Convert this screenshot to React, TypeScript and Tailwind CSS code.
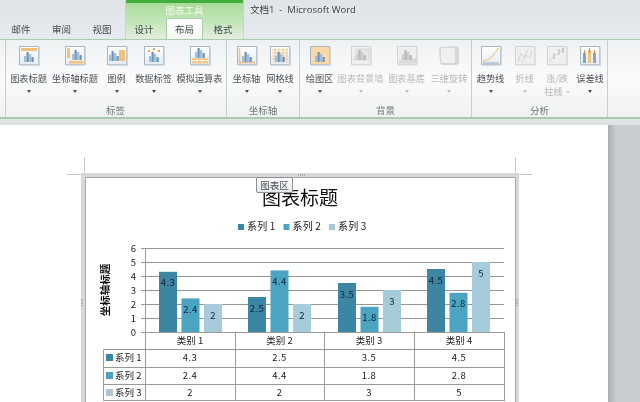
const font = "[font-family:'Noto_Sans_CJK_SC','Noto_Sans',sans-serif]"

type Kind = "title" | "axisTitle" | "legend" | "labels" | "table" | "axis" | "grid" | "plot" | "wall" | "floor" | "rotate" | "trend" | "lines" | "updown" | "error"

function Bars({ x = 7, base = 16, gray = false }: { x?: number; base?: number; gray?: boolean }) {
    const a = gray ? "#b3b6b8" : "#6f8fb8"
    const b = gray ? "#cbcdcf" : "#9cc3d6"
    return (
        <g>
            <rect x={x} y={base - 6} width="2.2" height="6" fill={b} />
            <rect x={x + 2.5} y={base - 10} width="2.2" height="10" fill={a} />
            <rect x={x + 5} y={base - 8} width="2.2" height="8" fill={b} />
            <rect x={x + 7.5} y={base - 5} width="2.2" height="5" fill={a} />
        </g>
    )
}

function RibbonIcon({ kind, off = false }: { kind: Kind; off?: boolean }) {
    if (kind === "rotate") {
        return (
            <svg width="22" height="21" viewBox="0 0 22 21">
                <path d="M3 2 L17 1 Q21 1 21 5 L21 17 Q21 20 17 20 L5 20 Q2 20 2 17 L1 4 Q1 2 3 2Z" fill="#d9d6d8" />
                <path d="M3 3 L15 3 Q17 3 17 5 L17 16 Q17 18 15 18 L5 18 Q3 18 3 16Z" fill="#f1f0f1" />
            </svg>
        )
    }
    return (
        <svg width="22" height="21" viewBox="0 0 22 21">
            <defs>
                <linearGradient id="iconFace" x1="0" y1="0" x2="0" y2="1">
                    <stop offset="0" stopColor="#ffffff" />
                    <stop offset="1" stopColor="#e4ecf5" />
                </linearGradient>
            </defs>
            <rect x="1.5" y="1.5" width="19" height="18" fill={off ? "#efefef" : kind === "plot" ? "#fbd9a3" : "url(#iconFace)"} stroke={off ? "#d0d2d4" : "#a9b6c4"} />
            <rect x="20.500" y="2" width="1.500" height="18.500" fill={off ? "#e2e2e2" : "#cdd5dd"} />
            <rect x="2" y="19.500" width="20" height="1.200" fill={off ? "#e2e2e2" : "#cdd5dd"} />
            {kind === "title" && <rect x="3" y="3" width="16" height="3" fill="#f3c078" />}
            {kind === "axisTitle" && <><rect x="3" y="3" width="3" height="10" fill="#f3c078" /><rect x="5" y="16" width="14" height="2.5" fill="#f3c078" /></>}
            {kind === "legend" && <rect x="13" y="5" width="6" height="11" fill="#f3c078" />}
            {kind === "labels" && <><rect x="5" y="5" width="2" height="2" fill="#eca655" /><rect x="10" y="3" width="2" height="2" fill="#eca655" /><rect x="15" y="5" width="2" height="2" fill="#eca655" /></>}
            {kind === "table" && <><rect x="3" y="13" width="16" height="5.5" fill="#f3c78c" /><path d="M3 15.5H19M8 13V18.5M13 13V18.5" stroke="#fff" strokeWidth=".6" /></>}
            {kind === "axis" && <path d="M3.5 3V17.5H19" fill="none" stroke="#f0ab5e" strokeWidth="1.6" strokeDasharray="1.6 .8" />}
            {kind === "grid" && <path d="M3 5H19M3 8H19M3 11H19M3 14H19M6 3V18M10 3V18M14 3V18M18 3V18" stroke="#f3c078" strokeWidth=".8" />}
            {kind === "wall" && <path d="M3 15L6 11V4H19V15Z" fill="#e6e6e6" stroke="#c8cacc" strokeWidth=".6" />}
            {kind === "floor" && <path d="M2.5 18L6 14H19.5V18Z" fill="#dcdcdc" stroke="#c8cacc" strokeWidth=".6" />}
            {(kind === "title" || kind === "labels" || kind === "table" || kind === "axis" || kind === "grid" || kind === "plot") && <Bars x={6} base={kind === "table" ? 13 : 17} />}
            {kind === "axisTitle" && <Bars x={8} base={15} />}
            {kind === "legend" && <Bars x={3} base={16} />}
            {(kind === "wall" || kind === "floor") && <Bars x={6} base={15} gray />}
            {kind === "trend" && <><path d="M3 16C9 15 13 12 18 3" fill="none" stroke="#e8a23c" strokeWidth="1.1" strokeDasharray="1.4 1" /><path d="M3 18H19" stroke="#8a95a1" strokeWidth=".8" /></>}
            {kind === "lines" && <path d="M4 17L7 8L10 12L14 4M8 18L12 10L16 13L18 5" fill="none" stroke="#cfd1d3" strokeWidth=".9" />}
            {kind === "updown" && <><path d="M3 17L8 11L13 8L18 3" fill="none" stroke="#cfd1d3" strokeWidth=".9" /><rect x="7" y="8" width="2" height="6" fill="#cfd1d3" /><rect x="12" y="4" width="2" height="6" fill="#cfd1d3" /><rect x="16" y="3" width="2" height="5" fill="#c4c6c8" /></>}
            {kind === "error" && (
                <g>
                    <rect x="4" y="8" width="3" height="10" fill="#8ba0c6" />
                    <rect x="9" y="5" width="3" height="13" fill="#ecca75" />
                    <rect x="14" y="8" width="3" height="10" fill="#8ba0c6" />
                    <path d="M5.500 5V10M10.500 3V8M15.500 5V10" stroke="#d08a45" strokeWidth=".9" />
                </g>
            )}
        </svg>
    )
}

function RibbonButton({ w, label, kind, off = false, second }: { w: string; label: string; kind: Kind; off?: boolean; second?: string }) {
    return (
        <div className={`${w} shrink-0 flex flex-col items-center`}>
            <RibbonIcon kind={kind} off={off} />
            <div className={`mt-[6px] h-[13px] text-[9.2px] leading-[13px] whitespace-nowrap ${off ? "text-[#b4b8bb]" : "text-[#4b5157]"}`}>{label}</div>
            {second ? (
                <div className="h-[13px] text-[9.2px] leading-[13px] text-[#b4b8bb] flex items-center gap-[3px] whitespace-nowrap">
                    {second}
                    <span className="w-0 h-0 border-x-[2px] border-t-[2px] border-x-transparent border-t-[#bcc0c3]" />
                </div>
            ) : (
                <div className="h-[13px] flex items-center">
                    <span className={`w-0 h-0 border-x-[2px] border-t-[3px] border-x-transparent ${off ? "border-t-[#bcc0c3]" : "border-t-[#4b5157]"}`} />
                </div>
            )}
        </div>
    )
}

function Group({ w, label, children }: { w: string; label: string; children: React.ReactNode }) {
    return (
        <div className={`${w} shrink-0 h-full border-r border-[#c3d2c6] flex flex-col`}>
            <div className="flex pt-[5px] h-[62px]">{children}</div>
            <div className="flex-1 flex items-center justify-center text-[9.5px] text-[#6f7a74] pt-[1px]">{label}</div>
        </div>
    )
}

function Tab({ label, w }: { label: string; w: string }) {
    return <div className={`${w} h-[20px] shrink-0 flex items-center justify-center text-[9.5px] text-[#454b50]`}>{label}</div>
}

const cats = [
    { name: "类别 1", x: 159, s: [4.3, 2.4, 2] },
    { name: "类别 2", x: 248, s: [2.5, 4.4, 2] },
    { name: "类别 3", x: 338, s: [3.5, 1.8, 3] },
    { name: "类别 4", x: 427, s: [4.5, 2.8, 5] },
]
const colors = ["#3d86a3", "#4aa4c2", "#a6cbdb"]
const gridYs = [248, 262, 276, 290, 304, 318, 332]
const colXs = [145, 235, 324, 414, 504]
const rowYs = [332, 349, 367, 384, 400]

function Chart() {
    return (
        <svg width="608" height="277" viewBox="0 125 608 277" className="block">
            {/* crop marks */}
            <path d="M84.500 157V175M67 174.500H84M515.500 157V175M518 174.500H532" stroke="#c4c6c8" />
            {/* selection frame */}
            <rect x="81" y="173" width="438" height="5" fill="#d8d8d8" />
            <rect x="81" y="173" width="5" height="229" fill="#d8d8d8" />
            <rect x="515" y="173" width="4" height="229" fill="#d8d8d8" />
            <path d="M85.500 402V177.500H515.500V402" fill="none" stroke="#a8a8a8" />
            <path d="M298 175H306M82 299V306M517 299V306" stroke="#a9a9a9" strokeDasharray="1 1" strokeWidth="2" />

            <text x="300" y="205" textAnchor="middle" fontSize="19" fill="#111">图表标题</text>

            {/* legend */}
            {["系列 1", "系列 2", "系列 3"].map((t, i) => (
                <g key={t}>
                    <rect x={238 + i * 45.500} y={224} width="6" height="6" fill={["#3d86a3", "#4aa4c2", "#a9c8d6"][i]} />
                    <text x={247 + i * 45.500} y={230} fontSize="10" letterSpacing=".2" fill="#222">{t}</text>
                </g>
            ))}

            {/* axis */}
            {gridYs.map((y, i) => (
                <g key={y}>
                    <line x1="141" x2="504" y1={y + 0.5} y2={y + 0.5} stroke="#959595" />
                    <text x="136" y={y + 3.500} textAnchor="end" fontSize="9.500" fill="#222">{6 - i}</text>
                </g>
            ))}
            <text transform="translate(109 290) rotate(-90)" textAnchor="middle" fontSize="10.500" fontWeight="700" fill="#111">坐标轴标题</text>

            {/* bars */}
            {cats.map(c => c.s.map((v, i) => {
                const bx = c.x + i * 22.500
                const h = v * 14
                return (
                    <g key={c.name + i}>
                        <rect x={bx} y={332 - h} width="18" height={h} fill={colors[i]} />
                        <text x={bx + 9} y={332 - h + 14.500} textAnchor="middle" fontSize="9.500" letterSpacing=".4" fill="#123">{v}</text>
                    </g>
                )
            }))}

            {/* data table */}
            <path d="M145 332.500H504.500V400.500H103.500V349.500H504.500M103.500 367.500H504.500M103.500 384.500H504.500M145.500 248V401M235.500 332V401M324.500 332V401M414.500 332V401M504.500 332V401" fill="none" stroke="#999999" />
            {cats.map((c, i) => (
                <text key={c.name} x={(colXs[i] + colXs[i + 1]) / 2} y="344" textAnchor="middle" fontSize="9.500" fill="#222">{c.name}</text>
            ))}
            {[0, 1, 2].map(r => (
                <g key={r}>
                    <rect x="106" y={rowYs[r + 1] + 5} width="7" height="7" fill={["#3d86a3", "#4aa4c2", "#a9c8d6"][r]} />
                    <text x="115" y={rowYs[r + 1] + 12} fontSize="9.500" fill="#222">系列 {r + 1}</text>
                    {cats.map((c, i) => (
                        <text key={c.name} x={(colXs[i] + colXs[i + 1]) / 2} y={rowYs[r + 1] + 12} textAnchor="middle" fontSize="9.500" letterSpacing=".4" fill="#222">{c.s[r]}</text>
                    ))}
                </g>
            ))}
        </svg>
    )
}

export default function App() {
    return (
        <div className={`relative w-[640px] h-[402px] overflow-hidden flex flex-col bg-white blur-[0.3px] ${font}`}>
            {/* title bar + tabs */}
            <div className="h-[39px] shrink-0 flex bg-gradient-to-b from-[#e0e4e8] to-[#e6e9ed]">
                <div className="flex items-end pl-px w-[125px] shrink-0">
                    <Tab label="邮件" w="w-[40px]" />
                    <Tab label="审阅" w="w-[41px]" />
                    <Tab label="视图" w="w-[40px]" />
                </div>
                <div className="w-[119px] shrink-0 flex flex-col bg-gradient-to-b from-[#a4da94] via-[#c6e6bc] via-60% to-[#e3eee0] border-x border-[#c5d6c2]">
                    <div className="h-[3px] bg-[#3fae3c]" />
                    <div className="h-[16px] flex items-center justify-center text-[9.5px] text-[#f1f9ee]">图表工具</div>
                    <div className="flex-1 flex items-end">
                        <Tab label="设计" w="w-[36px] mr-[4px]" />
                        <div className="w-[37px] h-[21px] shrink-0 flex items-center justify-center text-[9.5px] text-[#454b50] bg-gradient-to-b from-white to-[#f3f6f4] border-x border-t border-[#a8cfa6] rounded-t-[2px]">布局</div>
                        <Tab label="格式" w="w-[40px]" />
                    </div>
                </div>
                <div className="pl-[6px] pt-[1px] text-[9.5px] leading-[18px] text-[#3d4246] whitespace-pre [font-family:'Open_Sans','Noto_Sans_CJK_SC',sans-serif]">文档1  -  Microsoft Word</div>
            </div>

            {/* ribbon */}
            <div className="h-[80px] shrink-0 flex pl-[5px] border-t border-b-2 border-[#a9cdab] bg-gradient-to-b from-[#eef1f3] via-[#fafbfb] to-[#eff1f2]">
                <div className="absolute left-[5px] top-[40px] h-[78px] border-l border-[#c3d2c6]" />
                <Group w="w-[222px]" label="标签">
                    <RibbonButton w="w-[47px]" label="图表标题" kind="title" />
                    <RibbonButton w="w-[46px]" label="坐标轴标题" kind="axisTitle" />
                    <RibbonButton w="w-[37px]" label="图例" kind="legend" />
                    <RibbonButton w="w-[37px]" label="数据标签" kind="labels" />
                    <RibbonButton w="w-[55px]" label="模拟运算表" kind="table" />
                </Group>
                <Group w="w-[73px]" label="坐标轴">
                    <RibbonButton w="w-[39px]" label="坐标轴" kind="axis" />
                    <RibbonButton w="w-[28px]" label="网格线" kind="grid" />
                </Group>
                <Group w="w-[172px]" label="背景">
                    <RibbonButton w="w-[39px]" label="绘图区" kind="plot" />
                    <RibbonButton w="w-[43px]" label="图表背景墙" kind="wall" off />
                    <RibbonButton w="w-[49px]" label="图表基底" kind="floor" off />
                    <RibbonButton w="w-[36px]" label="三维旋转" kind="rotate" off />
                </Group>
                <Group w="w-[136px]" label="分析">
                    <RibbonButton w="w-[37px]" label="趋势线" kind="trend" />
                    <RibbonButton w="w-[31px]" label="折线" kind="lines" off />
                    <RibbonButton w="w-[34px]" label="涨/跌" kind="updown" off second="柱线" />
                    <RibbonButton w="w-[32px]" label="误差线" kind="error" />
                </Group>
            </div>

            {/* strip under the ribbon */}
            <div className="h-[6px] shrink-0 bg-[#dfe3e6]" />

            {/* document area */}
            <div className="relative flex-1 flex min-h-0">
                <div className="w-[608px] shrink-0 bg-white">
                    <Chart />
                </div>
                <div className="flex-1 bg-gradient-to-r from-[#a9adb2] via-[#c9cdd2] via-25% to-[#c9cdd2]" />
                <div className="absolute left-[256px] top-[52px] w-[37px] h-[16px] flex items-center justify-center text-[9.5px] text-[#4b5157] bg-gradient-to-b from-white to-[#e5e8ee] border border-[#8e9094] rounded-[2px]">图表区</div>
            </div>
        </div>
    )
}
